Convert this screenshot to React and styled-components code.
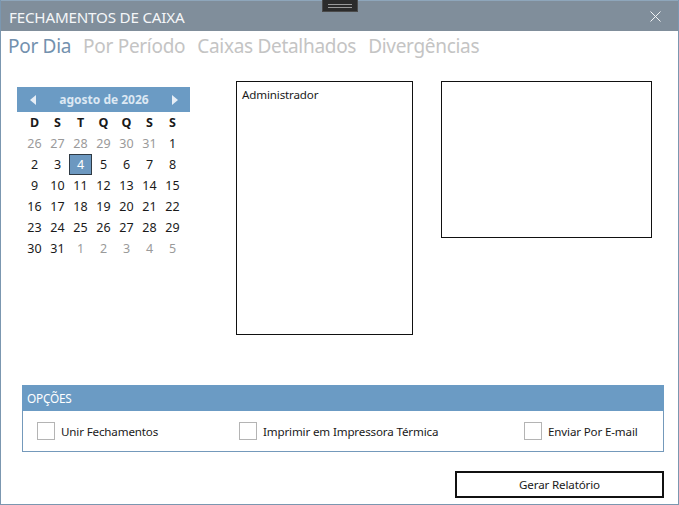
import React from "react";
import styled, { createGlobalStyle } from "styled-components";

const Global = createGlobalStyle`
  html, body { margin: 0; padding: 0; background: #ffffff; }
  body { font-family: "Noto Sans", "Open Sans", sans-serif; }
  * { box-sizing: border-box; }
`;

const Window = styled.div`
  position: relative;
  width: 679px;
  height: 505px;
  border: 1px solid #7b97b0;
  border-top: none;
  background: #ffffff;
  display: flex;
  flex-direction: column;
  overflow: hidden;
`;

const TitleBar = styled.div`
  height: 31px;
  margin: 0 -1px;
  background: #808e9b;
  display: flex;
  align-items: center;
  justify-content: space-between;
  padding: 0 18px 0 9px;
  border-top: 1px solid #8ea6bb;
`;

const Title = styled.div`
  color: #f4f6f8;
  font-size: 15.2px;
  letter-spacing: -0.2px;
  font-weight: 400;
  padding-top: 2px;
`;

const Grip = styled.div`
  position: absolute;
  top: 0;
  left: 321px;
  width: 36px;
  height: 12px;
  background: #2b2b2b;
  border: 1px solid #4a4a4a;
  border-top: none;
  display: flex;
  flex-direction: column;
  justify-content: center;
  align-items: center;
  gap: 2px;
`;

const GripLine = styled.div`
  width: 24px;
  height: 1px;
  background: #9a9a9a;
`;

const Tabs = styled.div`
  height: 30px;
  display: flex;
  align-items: center;
  gap: 12px;
  padding-left: 7px;
`;

const Tab = styled.div`
  font-size: 19px;
  letter-spacing: -0.3px;
  white-space: nowrap;
  color: ${(p) => (p.$active ? "#7391ae" : "#c4c4c4")};
`;

const Main = styled.div`
  display: flex;
  align-items: flex-start;
  padding: 20px 0 0 16px;
`;

const Calendar = styled.div`
  width: 173px;
  margin-top: 6px;
  margin-right: 46px;
`;

const CalHeader = styled.div`
  height: 25px;
  background: #6b9bc4;
  display: flex;
  align-items: center;
  justify-content: space-between;
  padding: 0 12px 0 13px;
`;

const CalTitle = styled.div`
  color: #dce8f3;
  font-weight: 700;
  font-size: 12px;
`;

const Grid = styled.div`
  display: grid;
  grid-template-columns: repeat(7, 23px);
  grid-auto-rows: 21px;
  padding-left: 6px;
`;

const DayName = styled.div`
  height: 20px;
  display: flex;
  align-items: center;
  justify-content: center;
  font-weight: 700;
  font-size: 12.5px;
  color: #1a1a1a;
`;

const Day = styled.div`
  display: flex;
  align-items: center;
  justify-content: center;
  font-size: 12.5px;
  color: ${(p) => (p.$selected ? "#ffffff" : p.$muted ? "#9a9a9a" : "#1a1a1a")};
  background: ${(p) => (p.$selected ? "#6c98c0" : "transparent")};
  border: ${(p) => (p.$selected ? "1px solid #2f3a44" : "none")};
`;

const ListBox = styled.div`
  width: ${(p) => p.$w}px;
  height: ${(p) => p.$h}px;
  border: 1px solid #111111;
  margin-right: ${(p) => p.$mr || 0}px;
  padding: 5px 5px;
  font-size: 11.6px;
  letter-spacing: -0.15px;
  color: #1a1a1a;
`;

const Options = styled.div`
  margin: 50px 0 0 21px;
  width: 642px;
`;

const OptionsHeader = styled.div`
  height: 26px;
  background: #6b9bc4;
  color: #ffffff;
  font-size: 11.8px;
  letter-spacing: -0.2px;
  display: flex;
  align-items: center;
  padding-left: 5px;
`;

const OptionsBody = styled.div`
  height: 41px;
  border: 1px solid #7499bb;
  border-top: none;
  display: flex;
  align-items: center;
  padding-left: 14px;
`;

const CheckItem = styled.label`
  display: flex;
  align-items: center;
  gap: 6px;
  font-size: 11.6px;
  letter-spacing: -0.15px;
  white-space: nowrap;
  color: #1a1a1a;
  flex: 0 0 ${(p) => (p.$w ? `${p.$w}px` : "auto")};
`;

const Box = styled.span`
  flex: 0 0 18px;
  width: 18px;
  height: 18px;
  border: 1px solid #b4b4b4;
  background: #ffffff;
`;

const Footer = styled.div`
  display: flex;
  justify-content: flex-end;
  padding-right: 14px;
  margin-top: 19px;
`;

const Button = styled.button`
  width: 209px;
  height: 27px;
  border: 2px solid #111111;
  background: #ffffff;
  font-family: inherit;
  font-size: 11.6px;
  letter-spacing: -0.15px;
  color: #1a1a1a;
  padding: 0;
`;

const Arrow = ({ dir }) => (
  <svg width="6" height="10" viewBox="0 0 6 10">
    {dir === "left" ? (
      <polygon points="6,0 6,10 0,5" fill="#e6eef6" />
    ) : (
      <polygon points="0,0 0,10 6,5" fill="#e6eef6" />
    )}
  </svg>
);

const CloseIcon = () => (
  <svg width="11" height="11" viewBox="0 0 11 11">
    <path d="M0.5 0.5 L10.5 10.5 M10.5 0.5 L0.5 10.5" stroke="#f2f4f6" strokeWidth="1" />
  </svg>
);

const names = ["D", "S", "T", "Q", "Q", "S", "S"];
const days = [];
[26, 27, 28, 29, 30, 31].forEach((d) => days.push({ d, m: true }));
for (let i = 1; i <= 31; i++) days.push({ d: i, m: false, s: i === 4 });
[1, 2, 3, 4, 5].forEach((d) => days.push({ d, m: true }));

export default function App() {
  return (
    <>
      <Global />
      <Window>
        <TitleBar>
          <Title>FECHAMENTOS DE CAIXA</Title>
          <CloseIcon />
        </TitleBar>
        <Grip>
          <GripLine />
          <GripLine />
        </Grip>
        <Tabs>
          <Tab $active>Por Dia</Tab>
          <Tab>Por Período</Tab>
          <Tab>Caixas Detalhados</Tab>
          <Tab>Divergências</Tab>
        </Tabs>
        <Main>
          <Calendar>
            <CalHeader>
              <Arrow dir="left" />
              <CalTitle>agosto de 2026</CalTitle>
              <Arrow dir="right" />
            </CalHeader>
            <Grid>
              {names.map((n, i) => (
                <DayName key={i}>{n}</DayName>
              ))}
              {days.map((x, i) => (
                <Day key={i} $muted={x.m} $selected={x.s}>
                  {x.d}
                </Day>
              ))}
            </Grid>
          </Calendar>
          <ListBox $w={177} $h={254} $mr={28}>Administrador</ListBox>
          <ListBox $w={211} $h={157} />
        </Main>
        <Options>
          <OptionsHeader>OPÇÕES</OptionsHeader>
          <OptionsBody>
            <CheckItem $w={202}>
              <Box />
              Unir Fechamentos
            </CheckItem>
            <CheckItem $w={285}>
              <Box />
              Imprimir em Impressora Térmica
            </CheckItem>
            <CheckItem>
              <Box />
              Enviar Por E-mail
            </CheckItem>
          </OptionsBody>
        </Options>
        <Footer>
          <Button>Gerar Relatório</Button>
        </Footer>
      </Window>
    </>
  );
}
